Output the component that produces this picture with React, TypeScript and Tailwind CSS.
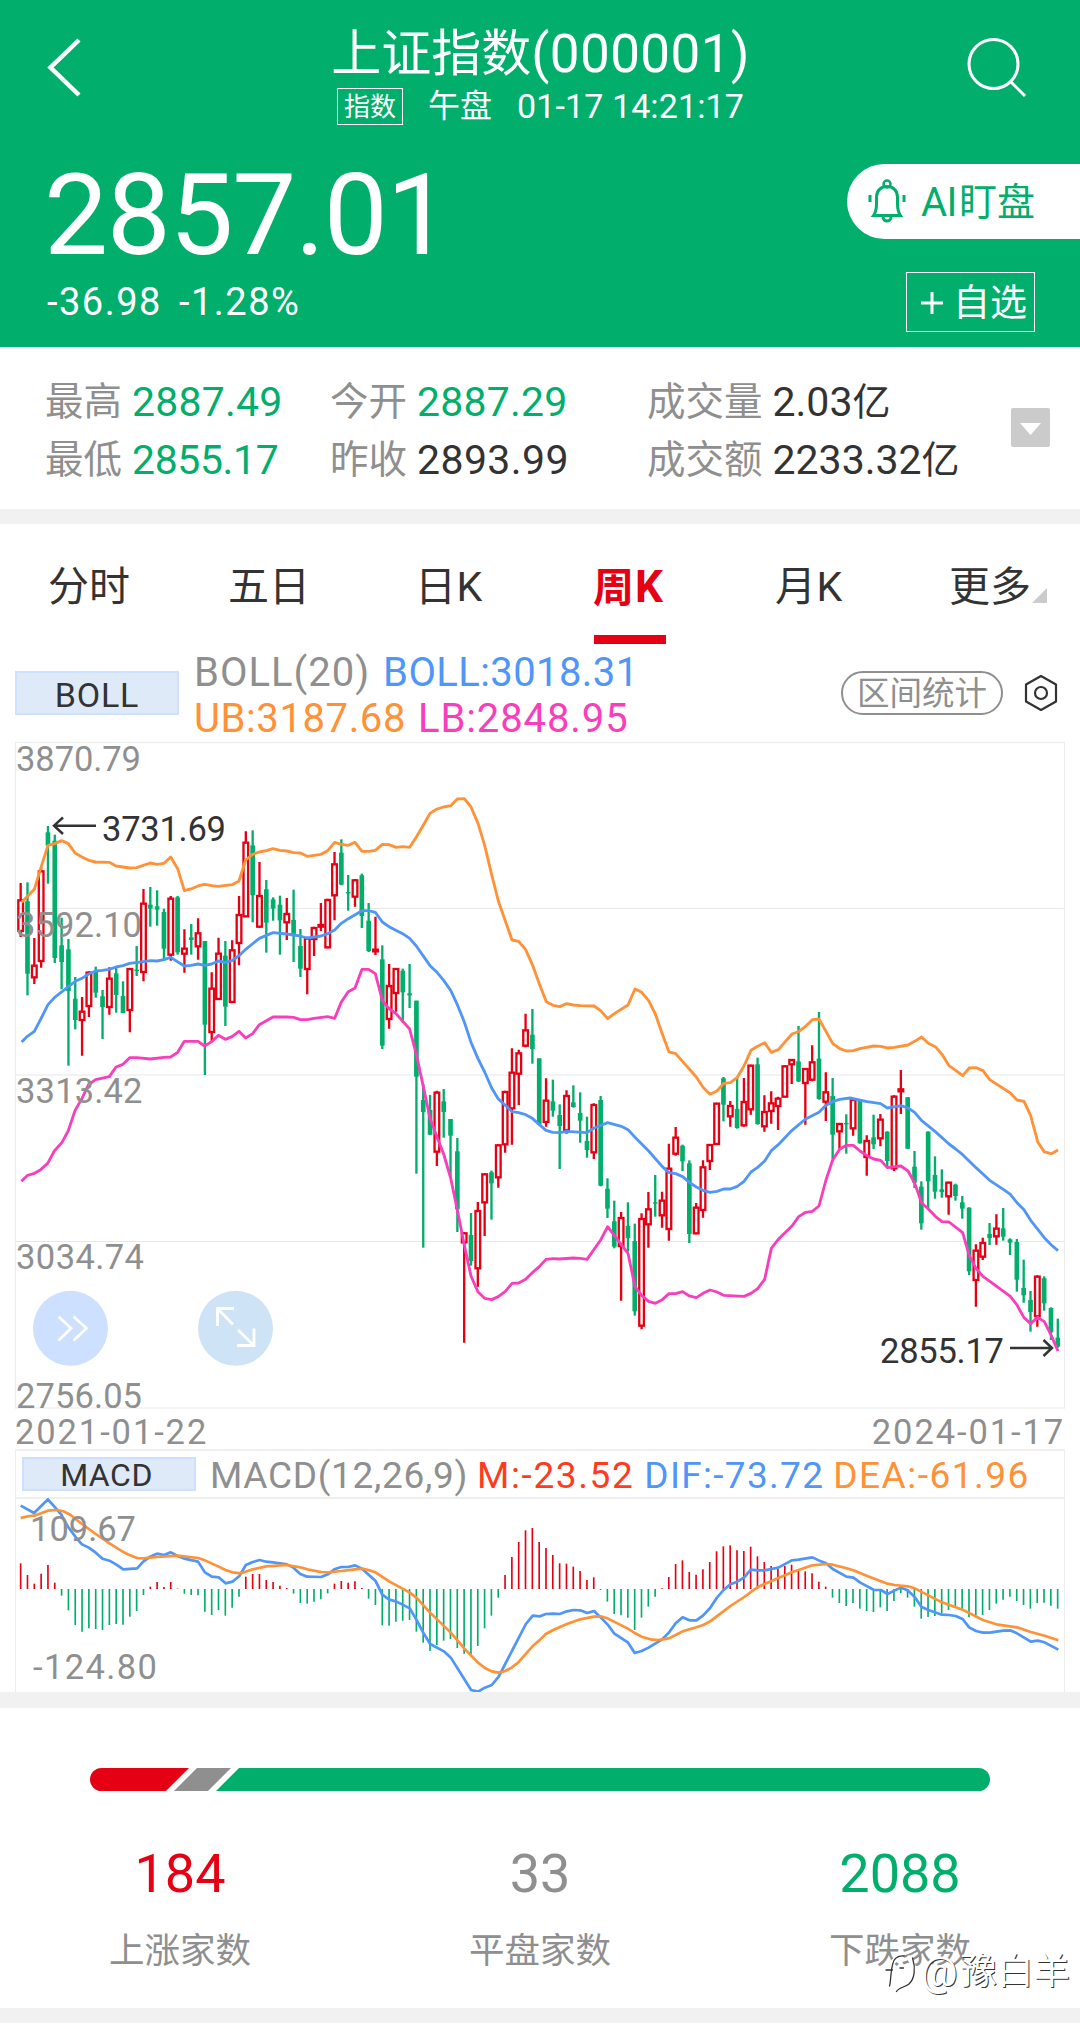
import { ReactNode } from 'react'

type Candle = [number, number, number, number, number]

// high, body top, body bottom, low, rising (1) or falling (0), three units per pixel
const candles: Candle[] = [
  [459, 511, 603, 621, 1], [457, 514, 731, 796, 0], [624, 707, 742, 762, 1], [410, 424, 693, 713, 1],
  [288, 307, 347, 461, 0], [314, 332, 684, 699, 0], [563, 646, 696, 778, 0], [627, 658, 783, 1007, 0],
  [741, 806, 870, 898, 0], [801, 845, 870, 977, 1], [724, 728, 828, 861, 1], [710, 726, 788, 803, 0],
  [780, 799, 831, 927, 0], [712, 746, 831, 854, 1], [712, 730, 795, 848, 0], [754, 798, 849, 850, 0],
  [714, 717, 840, 907, 1], [648, 719, 723, 738, 0], [477, 521, 726, 754, 1], [471, 524, 536, 590, 0],
  [481, 529, 539, 587, 0], [536, 546, 656, 688, 0], [498, 506, 674, 692, 1], [498, 502, 667, 674, 0],
  [598, 656, 671, 728, 1], [582, 622, 630, 674, 0], [565, 610, 649, 689, 1], [633, 633, 884, 1035, 0],
  [727, 776, 906, 935, 1], [623, 671, 807, 810, 1], [633, 677, 830, 888, 0], [631, 661, 816, 818, 1],
  [498, 555, 639, 706, 1], [304, 338, 559, 562, 1], [301, 346, 496, 577, 0], [396, 498, 590, 593, 1],
  [450, 478, 578, 668, 0], [502, 508, 536, 572, 0], [497, 524, 571, 674, 0], [504, 552, 577, 630, 1],
  [479, 570, 613, 696, 0], [597, 648, 716, 741, 0], [620, 626, 717, 793, 1], [590, 594, 627, 678, 1],
  [519, 585, 590, 603, 1], [506, 510, 652, 655, 1], [366, 403, 496, 571, 1], [328, 368, 464, 466, 0],
  [435, 486, 490, 542, 0], [447, 451, 500, 530, 1], [431, 436, 558, 594, 0], [519, 572, 663, 666, 0],
  [560, 659, 664, 675, 1], [646, 688, 947, 957, 0], [702, 768, 867, 896, 1], [714, 717, 789, 845, 1],
  [716, 722, 787, 878, 0], [702, 790, 796, 834, 0], [812, 812, 1040, 1331, 0], [1062, 1110, 1146, 1553, 0],
  [1095, 1140, 1214, 1215, 0], [1082, 1088, 1265, 1308, 1], [1077, 1114, 1146, 1223, 0], [1167, 1167, 1217, 1343, 0],
  [1224, 1264, 1438, 1506, 0], [1507, 1510, 1537, 1838, 1], [1449, 1515, 1593, 1607, 0], [1416, 1443, 1615, 1670, 1],
  [1330, 1333, 1417, 1518, 1], [1322, 1327, 1360, 1469, 0], [1243, 1246, 1342, 1373, 1], [1082, 1086, 1243, 1268, 1],
  [955, 1028, 1135, 1244, 1], [959, 970, 1031, 1125, 1], [851, 901, 947, 952, 1], [837, 914, 957, 1001, 0],
  [985, 985, 1184, 1184, 0], [1045, 1112, 1176, 1190, 1], [1049, 1114, 1142, 1160, 0], [1123, 1155, 1188, 1317, 0],
  [1081, 1098, 1201, 1211, 1], [1066, 1117, 1131, 1133, 0], [1087, 1149, 1172, 1238, 0], [1160, 1233, 1260, 1283, 0],
  [1120, 1125, 1267, 1287, 1], [1098, 1110, 1367, 1369, 0], [1345, 1376, 1436, 1464, 0], [1412, 1474, 1550, 1555, 0],
  [1446, 1464, 1548, 1712, 1], [1417, 1488, 1524, 1565, 0], [1481, 1533, 1744, 1757, 0], [1450, 1467, 1787, 1798, 1],
  [1386, 1438, 1483, 1553, 1], [1335, 1417, 1421, 1460, 0], [1385, 1412, 1456, 1493, 1], [1241, 1316, 1497, 1532, 1],
  [1191, 1223, 1271, 1277, 1], [1244, 1247, 1294, 1323, 0], [1291, 1300, 1512, 1539, 0], [1419, 1433, 1510, 1513, 1],
  [1291, 1312, 1440, 1463, 1], [1242, 1245, 1293, 1320, 1], [1118, 1121, 1242, 1244, 1], [1041, 1045, 1124, 1174, 0],
  [1113, 1128, 1159, 1190, 1], [1042, 1137, 1194, 1196, 0], [1044, 1116, 1186, 1190, 1], [1004, 1007, 1138, 1154, 1],
  [983, 1003, 1182, 1184, 0], [1096, 1146, 1189, 1205, 1], [1084, 1120, 1143, 1181, 1], [1100, 1106, 1128, 1200, 1],
  [1006, 1009, 1100, 1102, 1], [987, 990, 1003, 1062, 1], [888, 994, 1054, 1056, 0], [1014, 1017, 1059, 1184, 1],
  [946, 997, 1049, 1054, 1], [846, 986, 1107, 1109, 0], [1027, 1087, 1115, 1173, 1], [1044, 1098, 1214, 1288, 0],
  [1179, 1182, 1204, 1260, 1], [1153, 1179, 1183, 1271, 0], [1105, 1110, 1195, 1217, 1], [1110, 1113, 1240, 1241, 0],
  [1216, 1233, 1281, 1337, 1], [1154, 1222, 1243, 1257, 0], [1152, 1169, 1225, 1249, 1], [1204, 1205, 1293, 1315, 0],
  [1096, 1100, 1315, 1323, 1], [1020, 1078, 1084, 1152, 1], [1101, 1102, 1256, 1257, 0], [1263, 1310, 1358, 1374, 0],
  [1354, 1370, 1480, 1499, 0], [1204, 1205, 1354, 1435, 0], [1279, 1335, 1385, 1406, 0], [1318, 1378, 1386, 1403, 0],
  [1355, 1358, 1399, 1454, 1], [1361, 1364, 1398, 1412, 0], [1398, 1417, 1436, 1466, 0], [1432, 1433, 1624, 1635, 0],
  [1543, 1562, 1650, 1730, 1], [1523, 1539, 1580, 1590, 1], [1479, 1512, 1524, 1545, 0], [1453, 1496, 1519, 1544, 1],
  [1434, 1495, 1520, 1532, 0], [1525, 1528, 1538, 1575, 0], [1527, 1536, 1649, 1685, 0], [1589, 1674, 1696, 1718, 0],
  [1683, 1710, 1746, 1805, 0], [1636, 1640, 1759, 1790, 1], [1639, 1645, 1720, 1742, 0], [1732, 1734, 1807, 1830, 0],
  [1766, 1823, 1850, 1853, 0]
]

const upper =
  '65,517 103,478 123,412 144,346 164,341 185,332 205,341 226,370 246,381 266,391 287,396 328,397 348,408 369,411 389,414 410,413 430,406 451,399 471,403 492,400 512,381 533,416 553,482 573,477 594,468 614,463 635,467 655,469 696,464 717,453 737,390 758,373 778,366 799,362 819,356 840,361 860,363 881,368 901,369 922,379 963,373 983,362 1004,337 1024,343 1045,346 1065,337 1086,364 1106,364 1126,361 1147,343 1167,344 1188,352 1208,350 1229,352 1249,321 1269,287 1290,250 1311,237 1331,231 1352,227 1372,207 1393,206 1413,231 1434,280 1454,346 1475,434 1495,513 1536,630 1556,634 1577,659 1598,706 1618,762 1639,815 1659,826 1679,830 1700,821 1720,825 1741,827 1782,828 1802,842 1823,866 1843,851 1884,825 1905,777 1925,787 1946,812 1966,852 1987,912 2007,966 2027,971 2089,1041 2109,1072 2130,1093 2151,1083 2171,1060 2191,1058 2212,1042 2232,1008 2253,961 2273,949 2294,938 2314,967 2335,959 2376,912 2396,905 2417,889 2437,869 2457,867 2498,940 2519,956 2539,963 2560,962 2580,956 2621,948 2642,949 2662,954 2683,952 2724,945 2744,934 2765,921 2785,940 2806,950 2826,973 2847,1007 2867,1021 2888,1037 2908,1014 2928,1013 2949,1022 2969,1049 3031,1089 3051,1110 3072,1114 3092,1157 3113,1235 3133,1266 3154,1271 3174,1260'

const middle =
  '65,936 82,919 103,904 123,866 144,824 164,802 185,786 205,770 226,754 246,745 266,732 287,723 307,721 328,718 348,711 369,707 389,700 430,695 451,692 471,693 492,689 512,682 553,708 573,706 594,702 614,706 635,702 655,693 676,697 696,692 717,677 737,658 778,625 819,608 860,612 900,618 922,624 963,618 983,611 1004,600 1024,580 1045,566 1086,542 1106,542 1126,547 1147,576 1167,590 1208,611 1229,625 1249,648 1290,707 1311,727 1331,751 1352,781 1372,824 1393,876 1413,937 1434,986 1454,1026 1475,1074 1495,1107 1516,1126 1536,1145 1556,1148 1577,1154 1597,1165 1618,1184 1638,1201 1659,1207 1679,1208 1700,1204 1761,1208 1782,1194 1823,1178 1864,1189 1884,1199 1905,1222 1946,1263 1987,1310 2007,1328 2027,1331 2048,1340 2068,1357 2089,1371 2109,1381 2130,1387 2151,1384 2171,1377 2191,1377 2212,1369 2232,1354 2253,1326 2273,1312 2294,1293 2314,1262 2335,1244 2376,1201 2417,1167 2457,1147 2478,1126 2498,1115 2519,1108 2550,1104 2601,1115 2642,1121 2662,1134 2703,1127 2724,1134 2744,1147 2765,1172 2806,1205 2847,1242 2867,1257 2888,1274 2928,1313 2969,1351 3010,1378 3031,1393 3051,1418 3072,1439 3092,1471 3133,1523 3154,1545 3174,1562'

const lower =
  '64,1354 83,1336 101,1331 122,1319 143,1300 163,1263 186,1237 205,1202 225,1142 246,1105 266,1063 287,1049 328,1040 348,1011 369,1003 389,983 410,983 451,987 492,982 512,981 533,967 553,934 594,934 614,948 635,935 655,916 676,928 696,920 717,904 737,924 758,911 778,884 819,861 860,861 881,862 901,869 922,869 942,865 983,860 1004,865 1024,816 1045,785 1065,774 1086,718 1106,718 1126,731 1147,811 1167,836 1188,851 1229,897 1249,973 1270,1070 1290,1165 1311,1221 1331,1272 1352,1344 1372,1440 1393,1545 1413,1638 1434,1686 1454,1705 1475,1709 1495,1700 1516,1684 1536,1660 1556,1659 1577,1648 1597,1628 1618,1610 1638,1588 1659,1586 1679,1587 1720,1584 1741,1585 1761,1588 1802,1530 1823,1490 1884,1570 1905,1670 1925,1696 1946,1714 1966,1720 1987,1709 2007,1691 2027,1691 2048,1685 2068,1698 2089,1703 2109,1690 2130,1680 2151,1686 2171,1696 2232,1699 2253,1690 2273,1676 2294,1648 2314,1555 2335,1528 2376,1488 2396,1460 2417,1447 2437,1444 2457,1428 2478,1350 2498,1290 2519,1258 2539,1246 2560,1246 2580,1263 2601,1277 2621,1287 2642,1291 2662,1313 2703,1308 2724,1323 2744,1359 2765,1419 2785,1437 2806,1459 2826,1475 2847,1476 2888,1508 2908,1577 2928,1615 2949,1639 3031,1699 3051,1725 3072,1763 3092,1781 3113,1762 3133,1775 3154,1817 3174,1863'

const ZERO = 477
const histogram = [
  400, 435, 461, 431, 405, 458, 497, 541, 585, 605, 595, 597, 600, 585, 582, 584, 560, 543, 495, 470, 456, 471, 456,
  476, 491, 495, 496, 545, 555, 540, 557, 533, 500, 440, 432, 432, 450, 456, 467, 474, 491, 519, 521, 515, 508, 490,
  461, 453, 458, 454, 474, 506, 525, 586, 587, 575, 572, 570, 605, 638, 663, 645, 632, 627, 654, 671, 677, 648, 595,
  557, 503, 435, 381, 336, 301, 294, 336, 354, 375, 400, 401, 410, 423, 450, 442, 480, 515, 552, 556, 563, 600, 563,
  530, 500, 475, 441, 402, 391, 426, 434, 418, 396, 364, 349, 346, 361, 363, 350, 379, 396, 408, 416, 408, 404, 420,
  424, 430, 455, 470, 503, 519, 528, 519, 536, 543, 546, 532, 543, 513, 489, 503, 530, 566, 561, 558, 550, 540, 530,
  537, 562, 557, 555, 540, 521, 509, 500, 513, 525, 536, 519, 518, 527, 536
]

const dif =
  '60,227 99,249 139,208 158,230 178,254 198,291 220,322 238,343 258,353 278,368 298,386 318,392 338,404 358,418 398,415 416,395 436,380 456,371 476,375 496,367 516,378 536,386 575,395 595,427 615,440 635,442 655,460 675,455 695,438 714,405 734,396 754,390 773,395 793,397 833,403 852,413 872,432 892,440 932,441 952,433 971,418 991,411 1011,411 1031,406 1051,416 1090,452 1110,494 1130,509 1150,514 1190,535 1209,569 1229,608 1249,642 1289,664 1309,683 1368,780 1388,785 1408,773 1428,765 1448,740 1487,662 1527,582 1547,557 1568,559 1585,552 1606,551 1625,552 1646,544 1665,540 1685,541 1705,549 1725,543 1744,562 1764,583 1783,610 1823,637 1843,669 1863,663 1883,653 1922,629 1942,608 1962,580 1982,562 2002,571 2022,571 2042,556 2062,534 2081,504 2101,480 2121,463 2141,455 2161,442 2180,419 2200,421 2220,421 2260,413 2299,391 2319,389 2359,382 2379,392 2398,399 2418,417 2458,440 2478,443 2498,458 2538,480 2558,480 2577,492 2597,482 2616,473 2636,481 2656,501 2676,531 2696,540 2735,554 2755,555 2775,558 2795,567 2814,592 2834,603 2854,608 2874,608 2913,602 2933,601 2953,610 2993,635 3013,632 3033,637 3073,659'

const dea =
  '60,264 80,259 99,257 119,250 139,242 165,240 185,244 205,255 238,282 278,312 318,340 358,366 378,376 398,384 416,385 456,381 516,377 575,384 595,391 635,410 655,420 675,427 700,430 734,418 773,409 833,405 872,412 892,418 932,426 952,427 991,423 1031,418 1051,416 1070,420 1090,427 1130,454 1190,488 1209,503 1249,548 1309,608 1348,655 1388,698 1408,714 1428,724 1448,728 1467,723 1487,712 1507,695 1547,648 1568,629 1585,612 1606,600 1646,582 1685,568 1725,560 1744,559 1764,565 1823,596 1843,609 1863,620 1893,629 1912,630 1942,625 1962,615 1982,604 2022,592 2042,585 2062,574 2121,528 2161,501 2200,471 2220,462 2299,427 2319,420 2359,406 2398,402 2418,404 2458,415 2478,421 2518,438 2577,461 2597,465 2636,469 2656,475 2735,517 2795,539 2854,570 2893,583 2953,592 2993,606 3033,617 3073,631'

const RED = '#e60013'
const GREEN = '#02ae6b'

const Header = () => (
  <header className="bg-[#02ae6b] text-white h-[347px] flex flex-col">
    <div className="h-[139px] flex justify-between">
      <svg className="ml-[44px] mt-[35px]" width="40" height="64" fill="none" stroke="currentColor" strokeWidth="4.500">
        <path d="M35 5 L6.500 32.500 L35 60" />
      </svg>
      <div className="ml-[31px] flex flex-col items-center">
        <h1 className="mt-[24px] h-[60px] leading-[60px] text-[50px] whitespace-nowrap flex items-center">
          上证指数<span className="text-[53px] tracking-[0.4px]">(000001)</span>
        </h1>
        <div className="flex items-center h-[44px] whitespace-nowrap">
          <span className="mt-[1px] border border-white h-[37px] w-[66px] text-[26px] leading-[37px] text-center">指数</span>
          <span className="ml-[25px] text-[32px]">午盘</span>
          <span className="ml-[25px] text-[34px] tracking-[0.1px]">01-17 14:21:17</span>
        </div>
      </div>
      <svg className="mr-[52px] mt-[36px]" width="62" height="64" fill="none" stroke="currentColor" strokeWidth="3">
        <circle cx="27.500" cy="28" r="24.500" />
        <path d="M44.500 45.500 L59 60" />
      </svg>
    </div>
    <div className="flex flex-1 justify-between">
      <div className="pl-[44px]">
        <div className="mt-[17px] h-[118px] leading-[118px] text-[114px] tracking-[-1.3px]">2857.01</div>
        <div className="ml-[3px] mt-[4px] h-[48px] leading-[48px] text-[38px] tracking-[1.5px] flex gap-[17px]">
          <span>-36.98</span>
          <span>-1.28%</span>
        </div>
      </div>
      <div className="flex flex-col items-end">
        <button className="mt-[25px] h-[75px] w-[233px] rounded-l-full bg-white text-[#02ae6b] flex items-center pl-[20px]">
          <svg width="40" height="48" fill="none" stroke="currentColor" strokeWidth="3">
            <circle cx="20" cy="6" r="3.500" strokeWidth="2.500" />
            <path d="M6.500 37.500 C9 34 9.500 31 9.500 26 V19 C9.500 12.500 14 8.500 20 8.500 S30.500 12.500 30.500 19 V26 C30.500 31 31 34 33.500 37.500 Z" />
            <path d="M16 39 a4 4 0 0 0 8 0 M3 17 v7 M37 17 v7" />
          </svg>
          <span className="mt-[2px] ml-[14px] text-[40px] tracking-[-0.5px]">AI</span>
          <span className="mt-[2px] ml-[2px] text-[38px]">盯盘</span>
        </button>
        <button className="mt-[33px] mr-[45px] h-[60px] w-[129px] border border-white flex items-center pl-[13px]">
          <svg className="mt-[2px]" width="24" height="24" stroke="currentColor" strokeWidth="3">
            <path d="M1 12 H23 M12 1 V23" />
          </svg>
          <span className="mt-[3px] ml-[9px] text-[37px]">自选</span>
        </button>
      </div>
    </div>
  </header>
)

type StatProps = { label: string; value: string; unit?: string; className: string }

const Stat = ({ label, value, unit, className }: StatProps) => (
  <div className="flex items-center h-[58px] whitespace-nowrap">
    <span className="text-[38.500px] text-[#8f8f8f]">{label}</span>
    <span className={`mt-[1px] ml-[10px] text-[41px] ${className}`}>{value}</span>
    {unit && <span className={`text-[38px] ${className}`}>{unit}</span>}
  </div>
)

const Stats = () => (
  <section className="h-[162px] pt-[26px] pl-[45px] flex">
    <div className="w-[285px]">
      <Stat label="最高" value="2887.49" className="text-[#02ae6b] tracking-[0.2px]" />
      <Stat label="最低" value="2855.17" className="text-[#02ae6b] tracking-[-0.400px]" />
    </div>
    <div className="w-[317px]">
      <Stat label="今开" value="2887.29" className="text-[#02ae6b] tracking-[0.2px]" />
      <Stat label="昨收" value="2893.99" className="text-[#333] tracking-[0.4px]" />
    </div>
    <div className="w-[364px]">
      <Stat label="成交量" value="2.03" unit="亿" className="text-[#333]" />
      <Stat label="成交额" value="2233.32" unit="亿" className="text-[#333]" />
    </div>
    <svg className="mt-[35px]" width="39" height="39">
      <rect width="39" height="39" rx="2" fill="#cbcbcb" />
      <path d="M9 15 H30 L19.500 27 Z" fill="#fff" />
    </svg>
  </section>
)

const Tab = ({ children, active, className }: { children: ReactNode; active?: boolean; className: string }) => (
  <div className={`flex flex-col h-full ${active ? 'text-[#e60013] font-bold' : 'text-[#333]'} ${className}`}>
    <span className="mt-[33px] h-[60px] leading-[60px] whitespace-nowrap">{children}</span>
    {active && <span className="ml-[1px] mt-[18px] h-[9px] w-[72px] bg-[#e60013]" />}
  </div>
)

const Tabs = () => (
  <nav className="h-[121px] flex text-[41px] pl-[48px]">
    <Tab className="w-[180px]">分时</Tab>
    <Tab className="w-[187px]">五日</Tab>
    <Tab className="w-[178px] tracking-[0.600px]">日K</Tab>
    <Tab className="w-[182px] tracking-[1px]" active>
      周<span className="text-[44px]">K</span>
    </Tab>
    <Tab className="w-[174px] tracking-[0.600px]">月K</Tab>
    <Tab className="w-[83px]">更多</Tab>
    <svg className="mt-[64px]" width="15" height="15">
      <path d="M15 0 V15 H0 Z" fill="#cbcbcb" />
    </svg>
  </nav>
)

const Indicator = () => (
  <div className="h-[97px] flex pl-[15px]">
    <div className="mt-[26px] h-[44px] w-[164px] bg-[#dfeaf8] border-2 border-[#cde0fd] text-[34px] leading-[45px] text-center text-[#333] tracking-[0.8px]">
      BOLL
    </div>
    <div className="ml-[15px] w-[647px] text-[40px] whitespace-nowrap">
      <div className="mt-[5px] h-[46px] leading-[46px] flex gap-[13px]">
        <span className="text-[#8f8f8f] tracking-[1px]">BOLL(20)</span>
        <span className="text-[#5096f8] tracking-[0.4px]">BOLL:3018.31</span>
      </div>
      <div className="h-[46px] leading-[46px] flex gap-[12px]">
        <span className="text-[#ff9137] tracking-[0.6px]">UB:3187.68</span>
        <span className="text-[#f83ebb] tracking-[0.9px]">LB:2848.95</span>
      </div>
    </div>
    <div className="mt-[26px] h-[44px] w-[162px] rounded-full border-2 border-[#8f8f8f] text-[#8f8f8f] text-[32.500px] leading-[42px] text-center whitespace-nowrap">
      区间统计
    </div>
    <svg className="ml-[21px] mt-[29px]" width="34" height="38" fill="none" stroke="#333" strokeWidth="2.200">
      <path d="M17 2 L32 10.500 V27.500 L17 36 L2 27.500 V10.500 Z" strokeLinejoin="round" />
      <circle cx="17" cy="19" r="6" />
    </svg>
  </div>
)

const PriceChart = () => (
  <svg className="block overflow-visible" width="1080" height="667" viewBox="0 742 1080 667" fontSize="34.500" fill="#8f8f8f">
    <g stroke="#e8e8e8" strokeWidth="1.200" fill="none">
      <rect x="15.500" y="742.500" width="1049" height="665.500" stroke="#ededed" />
      <path d="M15 908.500 H1064 M15 1075 H1064 M15 1241.500 H1064" />
    </g>
    <g transform="translate(0 730) scale(0.33333)">
      {candles.map(([high, top, bottom, low, rising], i) => {
        const x = 62 + i * 20.47
        return rising ? (
          <g key={i} fill="none" stroke={RED} strokeWidth="7">
            <path d={`M${x} ${high} V${top} M${x} ${bottom} V${low}`} />
            <rect x={x - 7} y={top} width="14" height={bottom - top} />
          </g>
        ) : (
          <g key={i} fill={GREEN}>
            <rect x={x - 3.5} y={high} width="7" height={low - high} />
            <rect x={x - 7} y={top} width="14" height={bottom - top} />
          </g>
        )
      })}
      <g fill="none" strokeWidth="8.500" strokeLinejoin="round">
        <polyline points={upper} stroke="#ff9137" />
        <polyline points={middle} stroke="#5096f8" />
        <polyline points={lower} stroke="#f83ebb" />
      </g>
    </g>
    <text x="16" y="770.500" textLength="125">3870.79</text>
    <text x="16" y="936.500" textLength="126">3592.10</text>
    <text x="16" y="1102.500" textLength="126.500">3313.42</text>
    <text x="16" y="1268.500" textLength="128">3034.74</text>
    <text x="16" y="1408" textLength="126">2756.05</text>
    <g fill="#333">
      <text x="102" y="840.500" textLength="124">3731.69</text>
      <text x="880" y="1362.500" textLength="124">2855.17</text>
    </g>
    <g fill="none" stroke="#333" strokeWidth="2.500">
      <path d="M96 825.700 H54 M63 817.500 L54 825.700 L63 834" />
      <path d="M1010 1348 H1052 M1043.500 1340 L1052 1348 L1043.500 1356" />
    </g>
    <circle cx="70.500" cy="1328.300" r="37.500" fill="#cde0ff" />
    <circle cx="235.500" cy="1328.300" r="37.500" fill="#cfe3f6" />
    <g fill="none" stroke="#fff" strokeWidth="2.800">
      <path d="M58.500 1316.500 L71 1328.300 L58.500 1340.500 M73.500 1316.500 L86.500 1328.300 L73.500 1340.500" />
      <path d="M234 1308.500 H217.500 V1326 M217.500 1308.500 L233 1324.500 M254 1328.500 V1345.500 H237 M254 1345.500 L238 1330" />
    </g>
  </svg>
)

const MacdChart = () => (
  <svg className="block" width="1080" height="194" viewBox="0 1498 1080 194" fontSize="34.500" fill="#8f8f8f">
    <path d="M15.500 1498 V1692 M1064.500 1498 V1692" stroke="#ededed" />
    <g transform="translate(0 1430) scale(0.34439 0.33333)">
      {histogram.map((y, i) => {
        const x = 60 + i * 19.81
        return (
          <path key={i} d={`M${x} ${ZERO} V${y}`} stroke={y < ZERO ? RED : GREEN} strokeWidth="4.800" />
        )
      })}
      <g fill="none" strokeWidth="8" strokeLinejoin="round">
        <polyline points={dif} stroke="#5096f8" />
        <polyline points={dea} stroke="#ff9137" />
      </g>
    </g>
    <text x="30" y="1541" textLength="106">109.67</text>
    <text x="33" y="1678.500" textLength="124">-124.80</text>
  </svg>
)

const Macd = () => (
  <section>
    <div className="h-[40px] flex justify-between pl-[15px] pr-[15px] text-[34.500px] leading-[46px] text-[#8f8f8f] tracking-[1.900px]">
      <span>2021-01-22</span>
      <span>2024-01-17</span>
    </div>
    <div className="mx-[15px] h-[50px] border border-b-2 border-t-2 border-[#efefef] flex items-center whitespace-nowrap text-[37px]">
      <div className="ml-[6px] h-[34px] w-[174px] bg-[#dfeaf8] border-2 border-[#cde0fd] pr-[5px] text-[32px] leading-[33px] text-center text-[#333] tracking-[0.5px]">
        MACD
      </div>
      <span className="ml-[14px] mt-[4px] text-[#8f8f8f] tracking-[0.700px]">MACD(12,26,9)</span>
      <span className="ml-[9px] mt-[4px] text-[#ff3b1d] tracking-[1.600px]">M:-23.52</span>
      <span className="ml-[10px] mt-[4px] text-[#5096f8] tracking-[1.300px]">DIF:-73.72</span>
      <span className="ml-[9px] mt-[4px] text-[#ff9137] tracking-[1.500px]">DEA:-61.96</span>
    </div>
    <div className="-mt-px">
      <MacdChart />
    </div>
  </section>
)

const Count = ({ value, label, className }: { value: number; label: string; className: string }) => (
  <div className="w-[360px] flex flex-col items-center">
    <span className={`text-[54px] leading-[64px] ${className}`}>{value}</span>
    <span className="mt-[20px] text-[35.500px] leading-[50px] text-[#8f8f8f]">{label}</span>
  </div>
)

const Watermark = () => (
  <div className="absolute right-[10px] bottom-[12px] flex items-center text-white text-[36.500px] leading-[48px] [text-shadow:1px_1px_0.5px_#333]">
    <svg width="40" height="44" fill="none" strokeLinecap="round">
      <path d="M6 36 C9 28 6 10 20 7 M5 21 H13 M28 8 C36 16 32 32 16 38" stroke="#fff" strokeWidth="5" />
      <path
        d="M8.500 36 C10.500 30 9 12 15 8 Q18 5.500 23 6 M5 20 H11.500 M19 18 H22.500 M31.500 8 C35 18 33.500 29 28 34 C24 37.500 18 37 15.500 41.500"
        stroke="#333"
        strokeWidth="1.300"
      />
    </svg>
    <span className="mr-[3px] text-[41px]">@</span>
    豫白羊
  </div>
)

const Breadth = () => (
  <section className="relative h-[300px]">
    <svg className="block pt-[60px] box-content" width="1080" height="23">
      <path d="M101.500 0 H189 L166 23 H101.500 A11.500 11.500 0 0 1 101.500 0 Z" fill={RED} />
      <path d="M197 0 H231 L208 23 H174 Z" fill="#8f8f8f" />
      <path d="M239 0 H978.500 A11.500 11.500 0 0 1 978.500 23 H216 Z" fill={GREEN} />
    </svg>
    <div className="mt-[51px] flex">
      <Count value={184} label="上涨家数" className="text-[#e60013]" />
      <Count value={33} label="平盘家数" className="text-[#8f8f8f]" />
      <Count value={2088} label="下跌家数" className="text-[#02ae6b]" />
    </div>
    <Watermark />
  </section>
)

const Divider = () => <div className="h-[15px] bg-[#f1f1f1]" />

const App = () => (
  <div className="w-[1080px] h-[2033px] bg-white overflow-hidden font-['Roboto','Noto_Sans_CJK_SC',sans-serif]">
    <Header />
    <Stats />
    <Divider />
    <Tabs />
    <Indicator />
    <PriceChart />
    <Macd />
    <div className="h-[16px] bg-[#f1f1f1]" />
    <Breadth />
    <Divider />
  </div>
)

export default App
